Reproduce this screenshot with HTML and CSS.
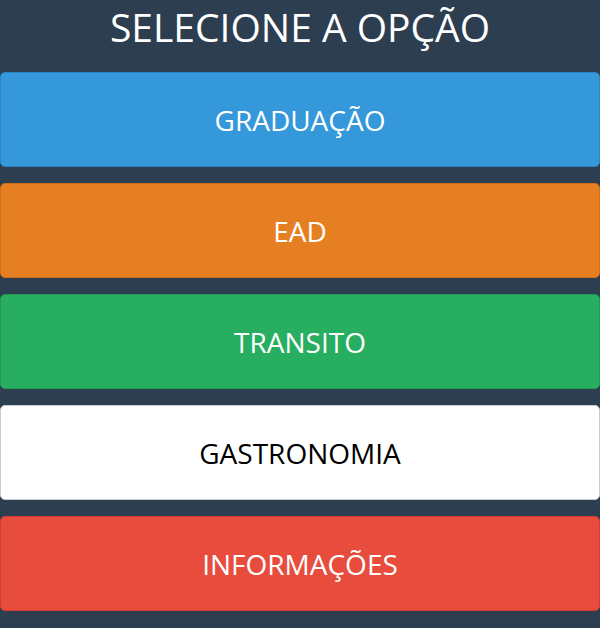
FILE: index.html
```html
<!DOCTYPE html>
<html lang="pt">
<head>
<meta charset="utf-8">
<link rel="stylesheet" href="styles.css">
</head>
<body>
<div class="page">
  <h1 class="title">SELECIONE A OPÇÃO</h1>
  <div class="options">
    <a class="opt opt-blue">GRADUAÇÃO</a>
    <a class="opt opt-orange">EAD</a>
    <a class="opt opt-green">TRANSITO</a>
    <a class="opt opt-white">GASTRONOMIA</a>
    <a class="opt opt-red">INFORMAÇÕES</a>
  </div>
</div>
</body>
</html>
```

FILE: styles.css
```css
html, body {
  margin: 0;
  padding: 0;
  background: #2c3e50;
  height: 100%;
}
.page {
  font-family: "Open Sans", "Noto Sans", sans-serif;
  color: #fff;
}
.title {
  margin: 0;
  height: 72px;
  line-height: 54px;
  font-size: 39px;
  font-weight: 400;
  text-align: center;
}
.options {
  display: flex;
  flex-direction: column;
  gap: 16px;
}
.opt {
  display: flex;
  align-items: center;
  justify-content: center;
  height: 95px;
  box-sizing: border-box;
  border: 1px solid;
  border-radius: 5px;
  font-size: 28px;
  color: #fff;
  padding-top: 1px;
}
.opt-blue { background: #3498db; border-color: #2a85c4; }
.opt-orange { background: #e67e22; border-color: #d06f18; }
.opt-green { background: #27ae60; border-color: #219a54; }
.opt-white { background: #fff; border-color: #c5ccd3; color: #000; }
.opt-red { background: #e74c3c; border-color: #d43d2e; }
```
